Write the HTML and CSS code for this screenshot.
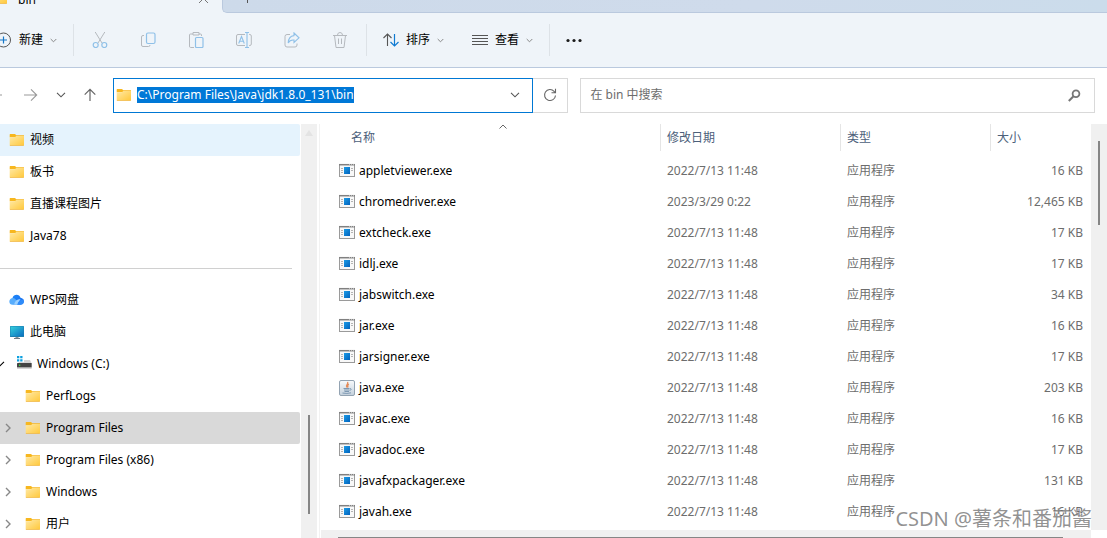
FILE: index.html
```html
<!DOCTYPE html>
<html lang="zh-CN">
<head>
<meta charset="utf-8">
<title>bin</title>
<link rel="stylesheet" href="styles.css">
</head>
<body>
<svg class="defs" aria-hidden="true">
  <defs>
    <linearGradient id="gFolder" x1="0" y1="0" x2="1" y2="1"><stop offset="0" stop-color="#ffe9a6"/><stop offset="1" stop-color="#ffc83a"/></linearGradient>
    <linearGradient id="gScreen" x1="0" y1="0" x2="1" y2="1"><stop offset="0" stop-color="#35d0dc"/><stop offset="1" stop-color="#0b6fc0"/></linearGradient>
    <linearGradient id="gBlue" x1="0" y1="0" x2="1" y2="1"><stop offset="0" stop-color="#1c9be6"/><stop offset="1" stop-color="#0062bd"/></linearGradient>
    <linearGradient id="gJava" x1="0" y1="0" x2="0" y2="1"><stop offset="0" stop-color="#f8fafc"/><stop offset="1" stop-color="#c3d0dc"/></linearGradient>
    <linearGradient id="gDisk" x1="0" y1="0" x2="0" y2="1"><stop offset="0" stop-color="#e6e6e6"/><stop offset="1" stop-color="#b4b4b4"/></linearGradient>
    <linearGradient id="gCloud" x1="0" y1="0" x2="1" y2="1"><stop offset="0" stop-color="#1c86f8"/><stop offset="1" stop-color="#1a6cf0"/></linearGradient>
  </defs>
  <symbol id="folder" viewBox="0 0 16 16">
    <path d="M.7 2.500q0-.5.500-.5H6l1.300 1.300H15v2H.7z" fill="#f7b71f"/>
    <path d="M.7 5.300h5.200L7.200 4h7.800V13q0 .6-.6.600H1.300q-.6 0-.6-.6z" fill="url(#gFolder)"/>
    <path d="M.9 13.500h13.900" stroke="#efb441" stroke-width=".7"/>
  </symbol>
  <symbol id="cloud" viewBox="0 0 16 16">
    <path d="M3.500 6C4.500 1.800 10.500 1.500 11.500 5.700c4.600.8 4.500 6.800-.2 7H4.800z" fill="url(#gCloud)"/>
    <path d="M.3 10C.3 6.500 4 4.800 6.500 7.300L10 12.700H3Q.6 12.700.3 10z" fill="#58adfc"/>
    <path d="M5 12.700Q6 7.200 11.500 6.900l-3.200 5.800z" fill="#9bd0ff"/>
    <path d="M8.300 12.700Q9 8 14.500 7.200 16 12.700 11 12.700z" fill="#2e8bf9"/>
  </symbol>
  <symbol id="monitor" viewBox="0 0 16 16">
    <rect x="6.500" y="12.500" width="3" height="1.800" fill="#8a9299"/><path d="M5 14.500h6" stroke="#6d7a84"/>
    <rect x="1" y="2" width="14" height="11" rx=".6" fill="#1c7fb0"/>
    <rect x="1.500" y="2.500" width="13" height="9.500" fill="url(#gScreen)"/>
  </symbol>
  <symbol id="disk" viewBox="0 0 16 16">
    <path d="M1 0h2.300v2.300H1zM4.200 0h2.300v2.300H4.200zM1 3.200h2.300v2.300H1zM4.200 3.200h2.300v2.300H4.200z" fill="#0da0df"/>
    <path d="M3 6h11l1.500 2h-14z" fill="url(#gDisk)"/><path d="M8 4h6l1.500 3H8z" fill="#d4d4d4"/>
    <rect x="1" y="7" width="14.700" height="4.500" rx=".6" fill="#444"/><rect x="3" y="8.600" width="1.300" height="1.300" fill="#35e34a"/>
    <path d="M1 12h14.700" stroke="#aaa"/>
  </symbol>
  <symbol id="exe" viewBox="0 0 16 16">
    <rect x=".5" y="1.500" width="15" height="12" fill="#f8f8f8" stroke="#9a9a9a"/>
    <path d="M0 1.700h16" stroke="#808080" stroke-width="1.500"/><path d="M10 1.700h1M12 1.700h1M14 1.700h1" stroke="#ccc"/>
    <path d="M2 5.500h2M2 7.500h2M2 9.500h2M12 5.500h2M12 7.500h2" stroke="#b5b5b5"/>
    <rect x="5" y="4" width="6" height="7" fill="url(#gBlue)"/>
  </symbol>
  <symbol id="java" viewBox="0 0 16 16">
    <rect x=".5" y=".5" width="15" height="15" rx="1.500" fill="url(#gJava)" stroke="#93a3b2"/>
    <path d="M8.500 2C10 4 6.200 4.500 8 7.500M10 4C7.500 5 9.800 6 8.500 7.500" fill="none" stroke="#e48a58" stroke-width="1.300"/>
    <path d="M4.500 8.500h6M5 10h5.500M5.500 11.500h4.500M3.500 13q4.500 1 8.500-.2M11 8.500q2.500.2 0 2.200" fill="none" stroke="#7d98b2"/>
  </symbol>
  <symbol id="down" viewBox="0 0 7 5"><path d="M.7 1l2.800 2.800L6.300 1" fill="none" stroke="currentColor"/></symbol>
  <symbol id="down-lg" viewBox="0 0 10 6"><path d="M1 .8l4 4 4-4" fill="none" stroke="currentColor" stroke-width="1.100"/></symbol>
  <symbol id="right" viewBox="0 0 6 10"><path d="M1 1l4 4-4 4" fill="none" stroke="currentColor" stroke-width="1.400"/></symbol>
</svg>

<div class="tabs">
  <div class="tab"><svg class="i16"><use href="#folder"/></svg><span class="tab-name">bin</span>
    <button class="bare" aria-label="关闭"><svg width="9" height="9" viewBox="0 0 9 9"><path d="M0 0l9 9M9 0L0 9" stroke="#777"/></svg></button></div>
  <div class="tab-rest"><button class="bare" aria-label="新标签页"><svg width="10" height="10" viewBox="0 0 10 10"><path d="M5.500 0v10M0 5.500h10" stroke="#555"/></svg></button></div>
</div>

<div class="toolbar">
  <button class="new"><svg width="12" height="16" viewBox="5 0 12 16"><g fill="none"><circle cx="8.500" cy="8" r="7" stroke="#555"/><path d="M8.500 4.500v7M5 8h7" stroke="#1677c8" stroke-width="1.200"/></g></svg>新建<svg class="c7"><use href="#down"/></svg></button>
  <span class="rule"></span>
  <div class="icons">
    <button aria-label="剪切"><svg class="i16" viewBox="0 0 16 16" fill="none"><path d="M3.200 0l6.800 11M12.800 0L6 11" stroke="#b5b9be"/><g stroke="#8fc0e8" stroke-width="1.200"><circle cx="3.700" cy="13" r="2.500"/><circle cx="12.300" cy="13" r="2.500"/></g></svg></button>
    <button aria-label="复制"><svg class="i16" viewBox="0 0 16 16" fill="none"><path d="M4 3.500H3Q1.500 3.500 1.500 5v8q0 1.500 1.500 1.500h5.500q1.500 0 1.500-1.500" stroke="#b5b9be"/><rect x="6.500" y="1" width="8.500" height="10.500" rx="1.500" stroke="#8fc0e8" stroke-width="1.200"/></svg></button>
    <button aria-label="粘贴"><svg class="i16" viewBox="0 0 16 16" fill="none"><path d="M5 2H2.500q-1 0-1 1v11q0 1.500 1 1.500H6M11 2h1.500q1 0 1 1v1M5 .5h6v2.500H5z" stroke="#b5b9be"/><rect x="7.500" y="5.500" width="7.500" height="10" rx="1" stroke="#8fc0e8" stroke-width="1.200"/></svg></button>
    <button aria-label="重命名"><svg class="i16" viewBox="0 0 16 16" fill="none"><path d="M9 2.500H2Q.5 2.500.5 4v8q0 1.500 1.500 1.500h7M13 2.500h.8q1.500 0 1.500 1.500v8q0 1.500-1.500 1.500H13" stroke="#b5b9be"/><path d="M11 .5v15M9 .5h4M9 15.500h4M2.700 11.500L5.500 4.500l2.800 7M3.700 9.300h3.800" stroke="#8fc0e8" stroke-width="1.100"/></svg></button>
    <button aria-label="共享"><svg class="i16" viewBox="0 0 16 16" fill="none"><path d="M6 2.500H3Q1 2.500 1 4.500V13q0 2 2 2h8q2 0 2-2v-1.500" stroke="#b5b9be"/><path d="M10 1l5 4.800-5 4.700V8Q6 7.500 4.200 11 4.500 4 10 3.600z" stroke="#8fc0e8" stroke-width="1.100"/></svg></button>
    <button aria-label="删除"><svg class="i16" viewBox="0 0 16 16" fill="none" stroke="#b5b9be"><path d="M1 3.500h14M2.500 3.500L4 15.500h8l1.500-12M5.500 3Q5.700.5 8 .5T10.500 3M6.500 6.500v5.500M9.500 6.500v5.500"/></svg></button>
  </div>
  <span class="rule"></span>
  <button class="menu"><svg class="i16" viewBox="0 0 16 16" fill="none"><path d="M4.500 14V2M.5 6l4-4 4 4" stroke="#555" stroke-width="1.100"/><path d="M11.500 2v12M7.500 10l4 4 4-4" stroke="#0f7ad2" stroke-width="1.200"/></svg>排序<svg class="c7"><use href="#down"/></svg></button>
  <button class="menu"><svg class="i16" viewBox="0 0 16 16"><path d="M0 3.500h16M0 6.500h16M0 9.500h16M0 12.500h16" stroke="#555"/></svg>查看<svg class="c7"><use href="#down"/></svg></button>
  <span class="rule last"></span>
  <button class="menu" aria-label="更多"><svg class="i16" viewBox="0 0 16 16" fill="#1b1b1b"><circle cx="2" cy="8.500" r="1.600"/><circle cx="8" cy="8.500" r="1.600"/><circle cx="14" cy="8.500" r="1.600"/></svg></button>
</div>

<div class="nav">
  <div class="nav-buttons">
    <button class="bare" aria-label="后退"><svg width="2" height="14" viewBox="11 0 2 14"><path d="M0 7h13" stroke="#999"/></svg></button>
    <button class="bare forward" aria-label="前进"><svg width="14" height="14" viewBox="0 0 14 14" fill="none" stroke="#999" stroke-width="1.100"><path d="M0 7h12.500M7 1.300L12.700 7 7 12.700"/></svg></button>
    <button class="bare recent" aria-label="最近"><svg width="10" height="6"><use href="#down-lg"/></svg></button>
    <button class="bare" aria-label="向上"><svg width="12" height="14" viewBox="0 0 12 14" fill="none" stroke="#666" stroke-width="1.200"><path d="M6 13V1.500M.7 6.700L6 1.400l5.300 5.300"/></svg></button>
  </div>
  <div class="address">
    <svg class="i16"><use href="#folder"/></svg>
    <input id="path" type="text" aria-label="地址" value="C:\Program Files\Java\jdk1.8.0_131\bin" autofocus spellcheck="false">
    <button class="bare" aria-label="历史"><svg width="10" height="6"><use href="#down-lg"/></svg></button>
  </div>
  <button class="refresh" aria-label="刷新"><svg width="14" height="14" viewBox="0 0 14 14" fill="none" stroke="#666" stroke-width="1.100"><path d="M12.500 7.500a5.500 5.500 0 1 1-1.400-4.200l1.400 1.400M12.500.8v4h-4"/></svg></button>
  <div class="search">
    <input type="search" aria-label="搜索" placeholder="在 bin 中搜索">
    <svg width="13" height="13" viewBox="0 0 13 13" fill="none" stroke="#777"><circle cx="8" cy="4.800" r="3.400" stroke-width="1.800"/><path d="M5.500 7.300L.8 12" stroke-width="2"/></svg>
  </div>
</div>

<div class="content">
  <nav class="side">
    <ul class="tree">
      <li class="hover"><svg class="i16"><use href="#folder"/></svg>视频</li>
      <li><svg class="i16"><use href="#folder"/></svg>板书</li>
      <li><svg class="i16"><use href="#folder"/></svg>直播课程图片</li>
      <li><svg class="i16"><use href="#folder"/></svg>Java78</li>
      <li class="split"></li>
      <li><svg class="i16"><use href="#cloud"/></svg>WPS网盘</li>
      <li><svg class="i16"><use href="#monitor"/></svg>此电脑</li>
      <li class="drive"><svg class="open" viewBox="5 0 5 6"><use href="#down-lg" width="10" height="6"/></svg><svg class="i16"><use href="#disk"/></svg>Windows (C:)</li>
      <li class="child leaf"><svg class="i16"><use href="#folder"/></svg>PerfLogs</li>
      <li class="child current"><svg class="twist"><use href="#right"/></svg><svg class="i16"><use href="#folder"/></svg>Program Files</li>
      <li class="child"><svg class="twist"><use href="#right"/></svg><svg class="i16"><use href="#folder"/></svg>Program Files (x86)</li>
      <li class="child"><svg class="twist"><use href="#right"/></svg><svg class="i16"><use href="#folder"/></svg>Windows</li>
      <li class="child"><svg class="twist"><use href="#right"/></svg><svg class="i16"><use href="#folder"/></svg>用户</li>
    </ul>
    <div class="vbar"><svg class="up" width="8" height="6" viewBox="0 0 8 6"><path d="M4 0l4 6H0z" fill="#e3e3e3"/></svg><span class="thumb"></span></div>
  </nav>
  <main class="main">
    <div class="pane">
      <div class="files">
        <table>
          <thead><tr>
            <th class="name"><span>名称</span><svg class="sort" viewBox="0 0 8 5"><path d="M.5 4.500L4 1l3.500 3.500" fill="none" stroke="#666"/></svg></th>
            <th class="date"><span>修改日期</span></th><th class="type"><span>类型</span></th><th class="size"><span>大小</span></th>
          </tr></thead>
          <tbody id="rows"></tbody>
        </table>
      </div>
      <div class="vbar main-bar"><span class="thumb"></span></div>
    </div>
    <div class="hbar"><span></span></div>
  </main>
</div>
<div class="mark">CSDN @薯条和番茄酱</div>
<script src="app.js"></script>
</body>
</html>
```
FILE: styles.css
```css
* { box-sizing: border-box; }
body {
  margin: 0; height: 100vh; overflow: hidden;
  display: flex; flex-direction: column;
  background: #fff; color: #000;
  font: 12px/16px "Noto Sans", "Noto Sans CJK SC", sans-serif;
}
svg { display: block; flex: none; }
button, input { font: inherit; color: inherit; border: 0; padding: 0; background: none; outline: 0; }
.defs { position: absolute; width: 0; height: 0; }
.i16 { width: 16px; height: 16px; }
.c7 { width: 7px; height: 5px; color: #888; }
.bare { display: flex; align-items: center; }

.tabs { display: flex; height: 13px; flex: none; overflow: hidden; background: #eff4f9; }
.tab { display: flex; align-items: flex-end; width: 230px; padding: 0 14px 5px 0; margin-left: -8px; }
.tab .i16 { margin-bottom: 2px; }
.tab-name { flex: 1; padding-left: 10px; }
.tab .bare { margin-bottom: 5px; }
.tab-rest {
  flex: 1; display: flex; align-items: flex-end; padding: 0 0 9px 19px;
  background: linear-gradient(90deg, #cddaea, #cfdbeb 60%, #cbdceb);
  border: solid #bac9de; border-width: 0 0 1px 1px; border-bottom-left-radius: 5px;
}
.toolbar {
  display: flex; align-items: center; flex: none; height: 55px;
  background: #eff4f9; border-bottom: 1px solid #bac9de;
}
.toolbar button { display: flex; align-items: center; height: 32px; }
.new { width: 73px; gap: 7px; }
.rule { width: 1px; height: 32px; background: #dde2e7; }
.rule.last { margin-left: 4px; }
.icons { display: flex; padding: 0 2px; }
.icons button { width: 48px; justify-content: center; }
.toolbar .menu { gap: 7px; padding: 0 12px 0 16px; }

.nav { display: flex; align-items: center; flex: none; height: 56px; padding: 0 12px 2px 0; }
.nav-buttons { display: flex; align-items: center; width: 113px; }
.nav-buttons .forward { margin-left: 22px; }
.nav-buttons .recent { margin: 0 18px; color: #555; }
.address {
  flex: 404 1 0; display: flex; align-items: center; height: 35px; min-width: 0;
  padding: 0 12px 0 2px; border: 1px solid #0078d4; color: #555;
}
.address input { flex: 1; min-width: 0; margin-left: 5px; color: #000; }
.address input::selection { background: #0078d7; color: #fff; }
.refresh { display: flex; align-items: center; justify-content: center; width: 35px; height: 35px; border: 1px solid #d9d9d9; border-left: 0; }
.search {
  flex: 490 1 0; display: flex; align-items: center; height: 35px; min-width: 0;
  margin-left: 12px; padding: 0 13px 0 9px; border: 1px solid #d9d9d9;
}
.search input { flex: 1; min-width: 0; }
.search input::placeholder { color: #6d6d6d; }

.content { flex: 1; min-height: 0; display: flex; }
.side { display: flex; width: 320px; flex: none; overflow: hidden; border-right: 1px solid #f2f2f2; }
.tree { list-style: none; margin: 0 1px 0 0; padding: 0; width: 300px; }
.tree li { display: flex; align-items: center; height: 32px; padding-left: 9px; gap: 5px; }
.tree .hover { background: #e5f3fd; border-radius: 0 2px 2px 0; }
.tree .current { background: #d9d9d9; border-radius: 0 2px 2px 0; }
.tree .split { padding: 0; margin-right: 8px; }
.tree .split::before { content: ""; flex: 1; height: 1px; background: #d0d0d0; }
.tree .drive { padding-left: 0; }
.open { width: 5px; height: 6px; margin-right: 6px; }
.tree .child { padding-left: 5px; }
.tree .leaf { padding-left: 25px; }
.twist { width: 6px; height: 10px; margin-right: 9px; color: #888; }
.vbar { display: flex; flex-direction: column; align-items: center; width: 16px; flex: none; background: #f0f0f0; }
.up { margin-top: 6px; }
.vbar .thumb { width: 2px; height: 99px; margin-top: 279px; background: #868686; }
.main-bar .thumb { height: 84px; margin-top: 17px; }

.main { flex: 1; min-width: 0; display: flex; flex-direction: column; padding-left: 1px; }
.pane { flex: 1; min-height: 0; display: flex; }
.files { flex: 1; min-width: 0; overflow: hidden; }
table { width: 100%; table-layout: fixed; border-collapse: collapse; }
th, td { height: 31px; padding: 0 0 0 6px; text-align: left; color: #6d6d6d; }
th { position: relative; padding: 0; font-weight: 400; color: #4c607a; vertical-align: top; }
th span { display: block; height: 27px; padding: 6px 0 0 6px; border-left: 1px solid #e5e5e5; }
th.name span { border-left: 0; padding-left: 30px; }
.date { width: 180px; }
.type { width: 150px; }
.size { width: 101px; }
.sort { position: absolute; top: 0; left: calc(50% + 8px); width: 8px; height: 5px; }
td { padding-left: 7px; }
td:first-child { padding-left: 18px; color: #000; }
td:last-child { padding: 0 8px 0 0; text-align: right; }
.file { display: flex; align-items: center; gap: 4px; }
.hbar { flex: none; height: 8px; margin-right: 16px; padding: 7px 28px 0 17px; background: #f0f0f0; }
.hbar span { display: block; height: 1px; background: #868686; }
.mark {
  position: absolute; right: 15px; bottom: 5px;
  font-size: 20px; line-height: 28px; color: rgba(110, 110, 110, .75); text-shadow: 1px 1px 0 rgba(255, 255, 255, .7);
}
```
FILE: app.js
```js
const files = [
  ["appletviewer.exe", "2022/7/13 11:48", "16 KB"],
  ["chromedriver.exe", "2023/3/29 0:22", "12,465 KB"],
  ["extcheck.exe", "2022/7/13 11:48", "17 KB"],
  ["idlj.exe", "2022/7/13 11:48", "17 KB"],
  ["jabswitch.exe", "2022/7/13 11:48", "34 KB"],
  ["jar.exe", "2022/7/13 11:48", "16 KB"],
  ["jarsigner.exe", "2022/7/13 11:48", "17 KB"],
  ["java.exe", "2022/7/13 11:48", "203 KB"],
  ["javac.exe", "2022/7/13 11:48", "16 KB"],
  ["javadoc.exe", "2022/7/13 11:48", "17 KB"],
  ["javafxpackager.exe", "2022/7/13 11:48", "131 KB"],
  ["javah.exe", "2022/7/13 11:48", "16 KB"]
];
document.getElementById("rows").innerHTML = files.map(([name, date, size]) =>
  `<tr><td><div class="file"><svg class="i16"><use href="#${name === "java.exe" ? "java" : "exe"}"/></svg>${name}</div></td>` +
  `<td>${date}</td><td>应用程序</td><td>${size}</td></tr>`).join("");
const path = document.getElementById("path");
path.focus();
path.select();
```
